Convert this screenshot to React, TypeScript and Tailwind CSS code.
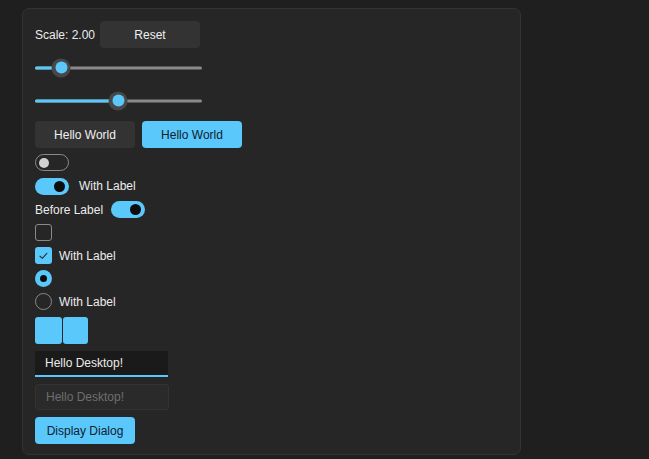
import React from "react";

const BLUE = "bg-[#5ac8fa]";

function Slider({ pos }: { pos: number }) {
  return (
    <div className="relative h-[27px] w-[167px]">
      <div className="absolute left-0 right-0 top-1/2 h-[3px] -translate-y-1/2 rounded-full bg-[#8a8a8a]" />
      <div
        className="absolute left-0 top-1/2 h-[3px] -translate-y-1/2 rounded-full bg-[#5ac8fa]"
        style={{ width: pos }}
      />
      <div
        className="absolute top-1/2 flex h-[19px] w-[19px] -translate-x-1/2 -translate-y-1/2 items-center justify-center rounded-full bg-[#474747]"
        style={{ left: pos }}
      >
        <div className="h-[12px] w-[12px] rounded-full bg-[#5ac8fa]" />
      </div>
    </div>
  );
}

function Toggle({ on }: { on: boolean }) {
  return on ? (
    <div className="flex h-[17px] w-[34px] items-center justify-end rounded-full bg-[#5ac8fa] pr-[4px]">
      <div className="h-[11px] w-[11px] rounded-full bg-[#0d0d0d]" />
    </div>
  ) : (
    <div className="flex h-[17px] w-[34px] items-center rounded-full border border-[#8a8a8a] pl-[3px]">
      <div className="h-[10px] w-[10px] rounded-full bg-[#d0d0d0]" />
    </div>
  );
}

export default function App() {
  return (
    <div
      className="min-h-[459px] w-full bg-[#1f1f1f] pl-[22px] pt-[8px] text-[12px] text-[#ececec]"
      style={{ fontFamily: '"Liberation Sans", Arial, sans-serif' }}
    >
      <div className="flex h-[447px] w-[499px] flex-col rounded-[7px] border border-[#333333] bg-[#262626] pl-[12px] pt-[12px]">
        <div className="flex h-[27px] items-center">
          <span className="w-[65px] whitespace-nowrap">Scale: 2.00</span>
          <button className="h-[27px] w-[100px] rounded-[4px] bg-[#333333] text-[#f0f0f0]">Reset</button>
        </div>
        <div className="mt-[6px]">
          <Slider pos={26} />
        </div>
        <div className="mt-[6px] h-[28px]">
          <Slider pos={83} />
        </div>
        <div className="mt-[6px] flex h-[27px] gap-[7px]">
          <button className="h-[27px] w-[100px] rounded-[4px] bg-[#333333] text-[#f0f0f0]">Hello World</button>
          <button className={`h-[27px] w-[100px] rounded-[4px] ${BLUE} text-[#102030]`}>Hello World</button>
        </div>
        <div className="mt-[6px] flex h-[17px] items-center">
          <Toggle on={false} />
        </div>
        <div className="mt-[6.5px] flex h-[17px] items-center gap-[10px]">
          <Toggle on={true} />
          <span>With Label</span>
        </div>
        <div className="mt-[6.5px] flex h-[17px] items-center gap-[8px]">
          <span>Before Label</span>
          <Toggle on={true} />
        </div>
        <div className="mt-[6px] flex h-[17px] items-center">
          <div className="h-[17px] w-[17px] rounded-[3px] border border-[#8a8a8a]" />
        </div>
        <div className="mt-[6px] flex h-[17px] items-center gap-[7px]">
          <div className={`flex h-[17px] w-[17px] items-center justify-center rounded-[3px] ${BLUE}`}>
            <svg width="13" height="13" viewBox="0 0 13 13" fill="none">
              <path d="M2.6 6.8 L5.3 9.3 L10.2 4" stroke="#1a2a3a" strokeWidth="1.1" />
            </svg>
          </div>
          <span>With Label</span>
        </div>
        <div className="mt-[6px] flex h-[17px] items-center">
          <div className={`flex h-[17px] w-[17px] items-center justify-center rounded-full ${BLUE}`}>
            <div className="h-[7px] w-[7px] rounded-full bg-[#0d0d0d]" />
          </div>
        </div>
        <div className="mt-[6px] flex h-[17px] items-center gap-[7px]">
          <div className="h-[17px] w-[17px] rounded-full border border-[#8a8a8a]" />
          <span>With Label</span>
        </div>
        <div className="mt-[7px] flex gap-[1px]">
          <div className={`h-[27px] w-[27px] rounded-[3px] ${BLUE}`} />
          <div className={`h-[27px] w-[25px] rounded-[3px] ${BLUE}`} />
        </div>
        <div className="mt-[7px] flex h-[26px] w-[133px] items-center border-b-2 border-[#5ac8fa] bg-[#1a1a1a] pl-[10px] text-[#ececec]">
          Hello Desktop!
        </div>
        <div className="mt-[7px] flex h-[26px] w-[134px] items-center rounded-[3px] border border-[#333333] bg-[#2a2a2a] pl-[10px] text-[#6e6e6e]">
          Hello Desktop!
        </div>
        <div className="mt-[7px]">
          <button className={`h-[27px] w-[100px] rounded-[4px] ${BLUE} text-[#102030]`}>Display Dialog</button>
        </div>
      </div>
    </div>
  );
}
